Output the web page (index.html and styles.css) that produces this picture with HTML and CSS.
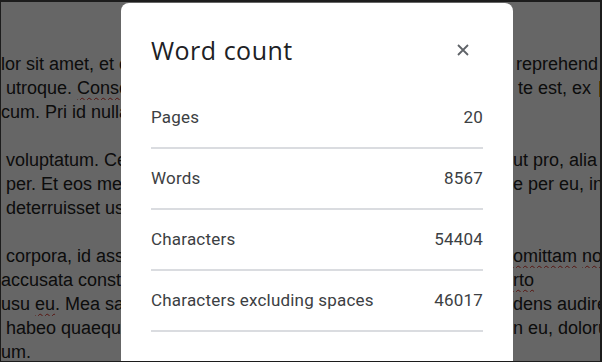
FILE: index.html
```html
<!DOCTYPE html>
<html lang="en">
<head>
    <meta charset="UTF-8">
    <title>Word count</title>
    <link rel="stylesheet" href="styles.css">
</head>
<body>
    <div class="frame">
        <div class="doc">
            <div class="line"><span class="left">lor sit amet, et eum altera</span><span class="right indent">reprehend</span></div>
            <div class="line"><span class="left"> utroque. <span class="typo">Consetetur</span></span><span class="right"> te est, ex<span class="hl"></span></span></div>
            <div class="line"><span class="left">cum. Pri id nullam vivendo</span><span class="right"></span></div>
            <div class="line"><span class="left">&nbsp;</span><span class="right"></span></div>
            <div class="line"><span class="left"> voluptatum. Cetero</span><span class="right">ut pro, alia</span></div>
            <div class="line"><span class="left"> per. Et eos meis</span><span class="right">e per eu, in</span></div>
            <div class="line"><span class="left"> deterruisset usu</span><span class="right"></span></div>
            <div class="line"><span class="left">&nbsp;</span><span class="right"></span></div>
            <div class="line"><span class="left"> corpora, id assum</span><span class="right"><span class="typo">omittam</span> <span class="typo">nor</span></span></div>
            <div class="line"><span class="left">accusata constituto</span><span class="right"><span class="typo">rto</span></span></div>
            <div class="line"><span class="left">usu <span class="typo">eu</span>. Mea saperet</span><span class="right">dens audire</span></div>
            <div class="line"><span class="left"> habeo quaeque</span><span class="right">n eu, doloru</span></div>
            <div class="line"><span class="left">um.</span><span class="right"></span></div>
        </div>

        <div class="scrim"></div>

        <div class="dialog">
            <div class="dialog-header">
                <h1>Word count</h1>
                <button class="close" aria-label="Close">
                    <svg width="12" height="12" viewBox="0 0 12 12">
                        <path d="M1 1 L11 11 M11 1 L1 11" stroke="#5f6368" stroke-width="1.8" fill="none"/>
                    </svg>
                </button>
            </div>
            <div class="stats">
                <div class="stat"><span>Pages</span><span>20</span></div>
                <div class="stat"><span>Words</span><span>8567</span></div>
                <div class="stat"><span>Characters</span><span>54404</span></div>
                <div class="stat"><span>Characters excluding spaces</span><span>46017</span></div>
            </div>
        </div>
    </div>
</body>
</html>
```

FILE: styles.css
```css
* {
    margin: 0;
    padding: 0;
    box-sizing: border-box;
}

body {
    width: 602px;
    height: 362px;
    overflow: hidden;
}

.frame {
    position: relative;
    width: 602px;
    height: 362px;
    overflow: hidden;
    background: #fff;
    border-style: solid;
    border-color: #1c1c1c;
    border-width: 2px 2px 1px 1px;
}

/* document behind the dialog */
.doc {
    padding-top: 50px;
    font-family: 'Liberation Sans', Arial, sans-serif;
    font-size: 18px;
    line-height: 24px;
    color: #222;
}

.line {
    display: grid;
    grid-template-columns: 512px 1fr;
    height: 24px;
}

.left,
.right {
    white-space: pre;
    overflow: hidden;
}

.indent {
    padding-left: 3px;
}

.typo {
    text-decoration: underline wavy #d93025;
    text-decoration-thickness: 1px;
    text-underline-offset: 3px;
}

.hl {
    display: inline-block;
    width: 2px;
    height: 16px;
    margin-left: 8px;
    vertical-align: -3px;
    background: #e8a000;
}

.scrim {
    position: absolute;
    inset: 0;
    background: rgba(0, 0, 0, 0.6);
}

/* dialog */
.dialog {
    position: absolute;
    left: 120px;
    top: 1px;
    width: 392px;
    height: 420px;
    background: #fff;
    border-radius: 8px;
    padding: 31px 30px;
    font-family: Roboto, 'Noto Sans', sans-serif;
    color: #3c4043;
}

.dialog-header {
    display: flex;
    justify-content: space-between;
    align-items: center;
    height: 32px;
}

.dialog-header h1 {
    font-family: 'Open Sans', sans-serif;
    font-weight: 400;
    font-size: 25px;
    line-height: 32px;
    letter-spacing: 0.5px;
    color: #202124;
}

.close {
    width: 24px;
    height: 24px;
    margin-right: 8px;
    border: none;
    background: none;
    display: flex;
    align-items: center;
    justify-content: center;
}

.stats {
    margin-top: 22px;
}

.stat {
    display: flex;
    justify-content: space-between;
    padding: 19px 0 20px;
    font-size: 17px;
    line-height: 20px;
    letter-spacing: 0.2px;
    border-bottom: 2px solid #dadce0;
}
```
